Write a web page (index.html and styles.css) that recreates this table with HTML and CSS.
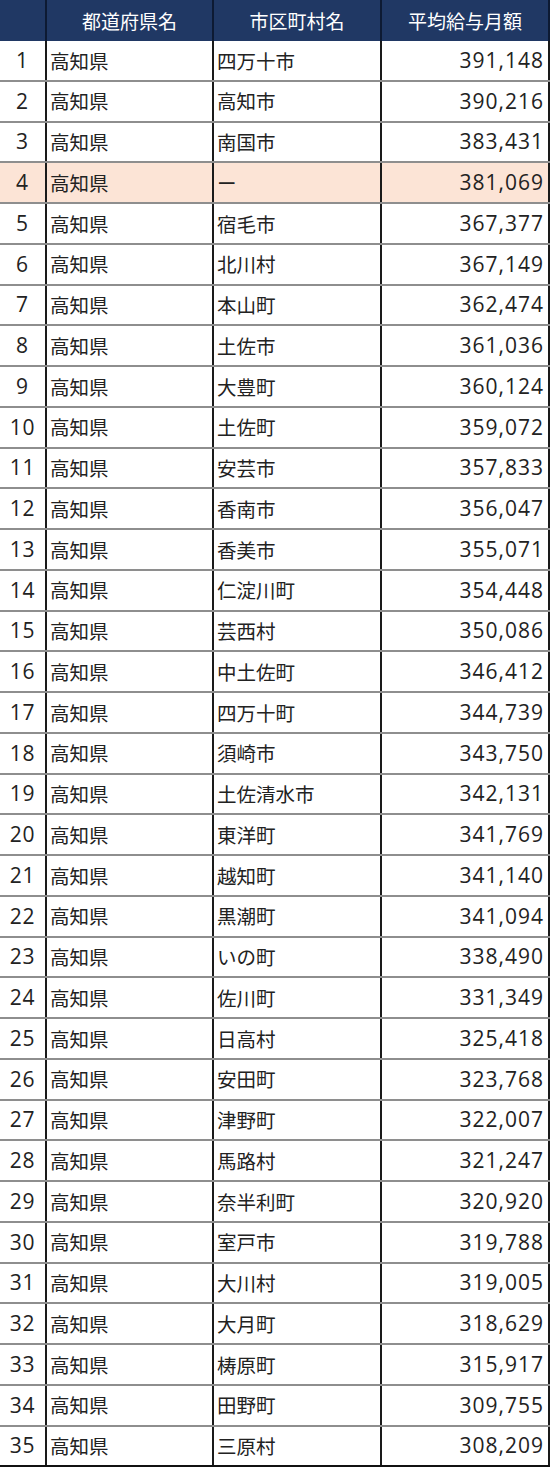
FILE: index.html
```html
<!DOCTYPE html>
<html lang="ja">
<head>
<meta charset="utf-8">
<link rel="stylesheet" href="styles.css">
</head>
<body>
<div class="table">
  <div class="row head">
    <div class="cell"></div>
    <div class="cell c">都道府県名</div>
    <div class="cell c">市区町村名</div>
    <div class="cell c">平均給与月額</div>
  </div>
  <div class="row"><div class="cell n">1</div><div class="cell">高知県</div><div class="cell">四万十市</div><div class="cell v">391,148</div></div>
  <div class="row"><div class="cell n">2</div><div class="cell">高知県</div><div class="cell">高知市</div><div class="cell v">390,216</div></div>
  <div class="row"><div class="cell n">3</div><div class="cell">高知県</div><div class="cell">南国市</div><div class="cell v">383,431</div></div>
  <div class="row hl"><div class="cell n">4</div><div class="cell">高知県</div><div class="cell">ー</div><div class="cell v">381,069</div></div>
  <div class="row"><div class="cell n">5</div><div class="cell">高知県</div><div class="cell">宿毛市</div><div class="cell v">367,377</div></div>
  <div class="row"><div class="cell n">6</div><div class="cell">高知県</div><div class="cell">北川村</div><div class="cell v">367,149</div></div>
  <div class="row"><div class="cell n">7</div><div class="cell">高知県</div><div class="cell">本山町</div><div class="cell v">362,474</div></div>
  <div class="row"><div class="cell n">8</div><div class="cell">高知県</div><div class="cell">土佐市</div><div class="cell v">361,036</div></div>
  <div class="row"><div class="cell n">9</div><div class="cell">高知県</div><div class="cell">大豊町</div><div class="cell v">360,124</div></div>
  <div class="row"><div class="cell n">10</div><div class="cell">高知県</div><div class="cell">土佐町</div><div class="cell v">359,072</div></div>
  <div class="row"><div class="cell n">11</div><div class="cell">高知県</div><div class="cell">安芸市</div><div class="cell v">357,833</div></div>
  <div class="row"><div class="cell n">12</div><div class="cell">高知県</div><div class="cell">香南市</div><div class="cell v">356,047</div></div>
  <div class="row"><div class="cell n">13</div><div class="cell">高知県</div><div class="cell">香美市</div><div class="cell v">355,071</div></div>
  <div class="row"><div class="cell n">14</div><div class="cell">高知県</div><div class="cell">仁淀川町</div><div class="cell v">354,448</div></div>
  <div class="row"><div class="cell n">15</div><div class="cell">高知県</div><div class="cell">芸西村</div><div class="cell v">350,086</div></div>
  <div class="row"><div class="cell n">16</div><div class="cell">高知県</div><div class="cell">中土佐町</div><div class="cell v">346,412</div></div>
  <div class="row"><div class="cell n">17</div><div class="cell">高知県</div><div class="cell">四万十町</div><div class="cell v">344,739</div></div>
  <div class="row"><div class="cell n">18</div><div class="cell">高知県</div><div class="cell">須崎市</div><div class="cell v">343,750</div></div>
  <div class="row"><div class="cell n">19</div><div class="cell">高知県</div><div class="cell">土佐清水市</div><div class="cell v">342,131</div></div>
  <div class="row"><div class="cell n">20</div><div class="cell">高知県</div><div class="cell">東洋町</div><div class="cell v">341,769</div></div>
  <div class="row"><div class="cell n">21</div><div class="cell">高知県</div><div class="cell">越知町</div><div class="cell v">341,140</div></div>
  <div class="row"><div class="cell n">22</div><div class="cell">高知県</div><div class="cell">黒潮町</div><div class="cell v">341,094</div></div>
  <div class="row"><div class="cell n">23</div><div class="cell">高知県</div><div class="cell">いの町</div><div class="cell v">338,490</div></div>
  <div class="row"><div class="cell n">24</div><div class="cell">高知県</div><div class="cell">佐川町</div><div class="cell v">331,349</div></div>
  <div class="row"><div class="cell n">25</div><div class="cell">高知県</div><div class="cell">日高村</div><div class="cell v">325,418</div></div>
  <div class="row"><div class="cell n">26</div><div class="cell">高知県</div><div class="cell">安田町</div><div class="cell v">323,768</div></div>
  <div class="row"><div class="cell n">27</div><div class="cell">高知県</div><div class="cell">津野町</div><div class="cell v">322,007</div></div>
  <div class="row"><div class="cell n">28</div><div class="cell">高知県</div><div class="cell">馬路村</div><div class="cell v">321,247</div></div>
  <div class="row"><div class="cell n">29</div><div class="cell">高知県</div><div class="cell">奈半利町</div><div class="cell v">320,920</div></div>
  <div class="row"><div class="cell n">30</div><div class="cell">高知県</div><div class="cell">室戸市</div><div class="cell v">319,788</div></div>
  <div class="row"><div class="cell n">31</div><div class="cell">高知県</div><div class="cell">大川村</div><div class="cell v">319,005</div></div>
  <div class="row"><div class="cell n">32</div><div class="cell">高知県</div><div class="cell">大月町</div><div class="cell v">318,629</div></div>
  <div class="row"><div class="cell n">33</div><div class="cell">高知県</div><div class="cell">梼原町</div><div class="cell v">315,917</div></div>
  <div class="row"><div class="cell n">34</div><div class="cell">高知県</div><div class="cell">田野町</div><div class="cell v">309,755</div></div>
  <div class="row last"><div class="cell n">35</div><div class="cell">高知県</div><div class="cell">三原村</div><div class="cell v">308,209</div></div>
</div>
</body>
</html>
```

FILE: styles.css
```css
* { box-sizing: border-box; }
html, body { margin: 0; padding: 0; background: #fff; }
body {
  width: 550px;
  height: 1467px;
  overflow: hidden;
  font-family: "Noto Sans CJK JP", "Noto Sans", sans-serif;
  color: #222;
}
.table {
  display: flex;
  flex-direction: column;
  width: 550px;
  height: 1467px;
}
.row {
  flex: 1 1 0;
  display: grid;
  grid-template-columns: 47px 167px 168px 168px;
  border-bottom: 2px solid #8e8e8e;
  min-height: 0;
}
.row.head {
  flex: 0 0 41px;
  background: #203864;
  color: #fff;
  border-bottom: none;
}
.row.last { border-bottom: 2px solid #111; }
.row.hl { background: #fce4d6; }
.cell {
  display: flex;
  align-items: center;
  border-right: 2px solid #1a1a1a;
  font-size: 19.5px;
  line-height: 1;
  padding-left: 3px;
  white-space: nowrap;
}
.row.head .cell { border-right-color: #0d1a33; font-size: 19px; }
.cell.c { justify-content: center; padding-left: 0; }
.cell.n {
  justify-content: center;
  padding-left: 0;
  font-family: "Open Sans", "Noto Sans", sans-serif;
  font-size: 21px;
  letter-spacing: 0.8px;
}
.cell.v {
  justify-content: flex-end;
  padding-right: 4px;
  font-family: "Open Sans", "Noto Sans", sans-serif;
  font-size: 21px;
  letter-spacing: 1px;
}
```
